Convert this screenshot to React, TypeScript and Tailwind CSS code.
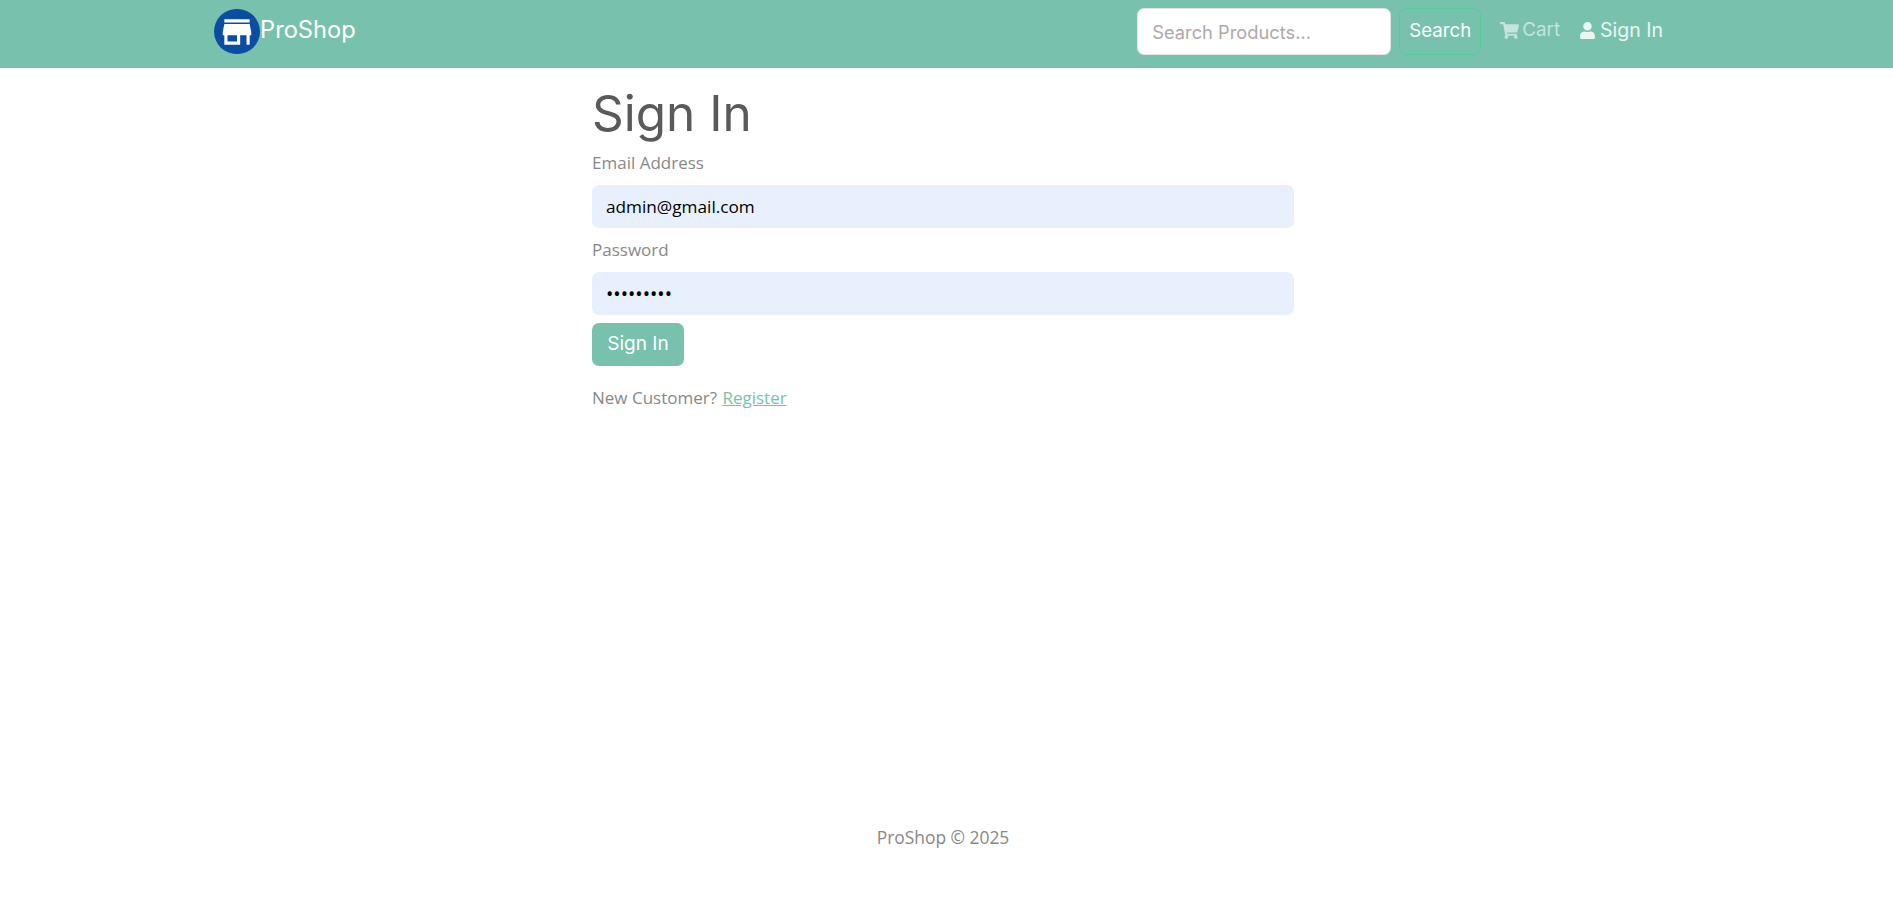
import { FaShoppingCart, FaUser } from "react-icons/fa";

const body = "font-['Open_Sans','Noto_Sans',sans-serif]";
const head = "font-['Inter','Noto_Sans',sans-serif]";

export default function App() {
  return (
    <div className={`min-h-screen flex flex-col bg-white ${body}`}>
      <header className={`h-[68px] bg-[#78c2ad] flex items-center pb-[5px] pl-[214px] pr-[230px] ${head}`}>
        <a className="flex items-center gap-0 text-white text-[23.7px] leading-[30px]">
          <span className="w-[46px] h-[45px] rounded-full bg-[#0b4da2] flex items-center justify-center">
            <svg viewBox="0 0 24 24" className="w-[38px] h-[38px]" fill="#fff">
              <path d="M20 4H4v2h16V4zm1 10v-2l-1-5H4l-1 5v2h1v6h10v-6h4v6h2v-6h1zm-9 4H6v-4h6v4z" />
            </svg>
          </span>
          <span className="-mt-[3px]">ProShop</span>
        </a>
        <div className="ml-auto flex items-center">
          <input
            placeholder="Search Products..."
            className="w-[254px] h-[47px] bg-white rounded-[7px] px-[14px] text-[18.3px] text-[#333] placeholder:text-[#b0a8a8] outline-none border border-[#e4e4e4]"
          />
          <button className="ml-[8px] w-[82px] h-[47px] rounded-[7px] border border-[#56cc9d] text-white text-[18.7px]">
            Search
          </button>
          <a className="ml-[19px] -mt-[2px] flex items-center gap-[3px] text-[#c4e4dc] text-[18.8px]">
            <FaShoppingCart className="w-[19px] h-[17px]" />
            <span>Cart</span>
          </a>
          <a className="ml-[19px] -mt-[2px] flex items-center gap-[4px] text-[#eaf6f2] text-[19.5px]">
            <FaUser className="w-[17px] h-[17px]" />
            <span>Sign In</span>
          </a>
        </div>
      </header>

      <main className="flex-1 pr-[7px] flex justify-center">
        <form className="w-[702px] pt-[16px]">
          <h1 className={`${head} text-[#5a5a5a] text-[49.5px] leading-[58px] mb-[8px]`}>Sign In</h1>
          <label className="block text-[#888888] text-[17px] leading-[26px] mb-[9px]">Email Address</label>
          <input
            readOnly
            value="admin@gmail.com"
            className="block w-full h-[43px] rounded-[7px] bg-[#e8f0fe] px-[14px] text-[17.2px] text-black outline-none"
          />
          <label className="block text-[#888888] text-[17px] leading-[26px] mt-[9px] mb-[9px]">Password</label>
          <input
            readOnly
            type="password"
            value="adminpass"
            className="block w-full h-[43px] rounded-[7px] bg-[#e8f0fe] px-[14px] text-[19.5px] text-black outline-none"
          />
          <button className={`${head} block mt-[8px] w-[92px] h-[43px] rounded-[7px] bg-[#78c2ad] text-white text-[19px]`}>
            Sign In
          </button>
          <p className="mt-[19px] text-[#888888] text-[17px] leading-[26px]">
            New Customer? <a className="ml-[1px] text-[#78c2ad] underline">Register</a>
          </p>
        </form>
      </main>

      <footer className="pr-[7px] h-[98px] pt-[10px] text-center text-[#888888] text-[17.4px] leading-[26px]">
        ProShop © 2025
      </footer>
    </div>
  );
}
